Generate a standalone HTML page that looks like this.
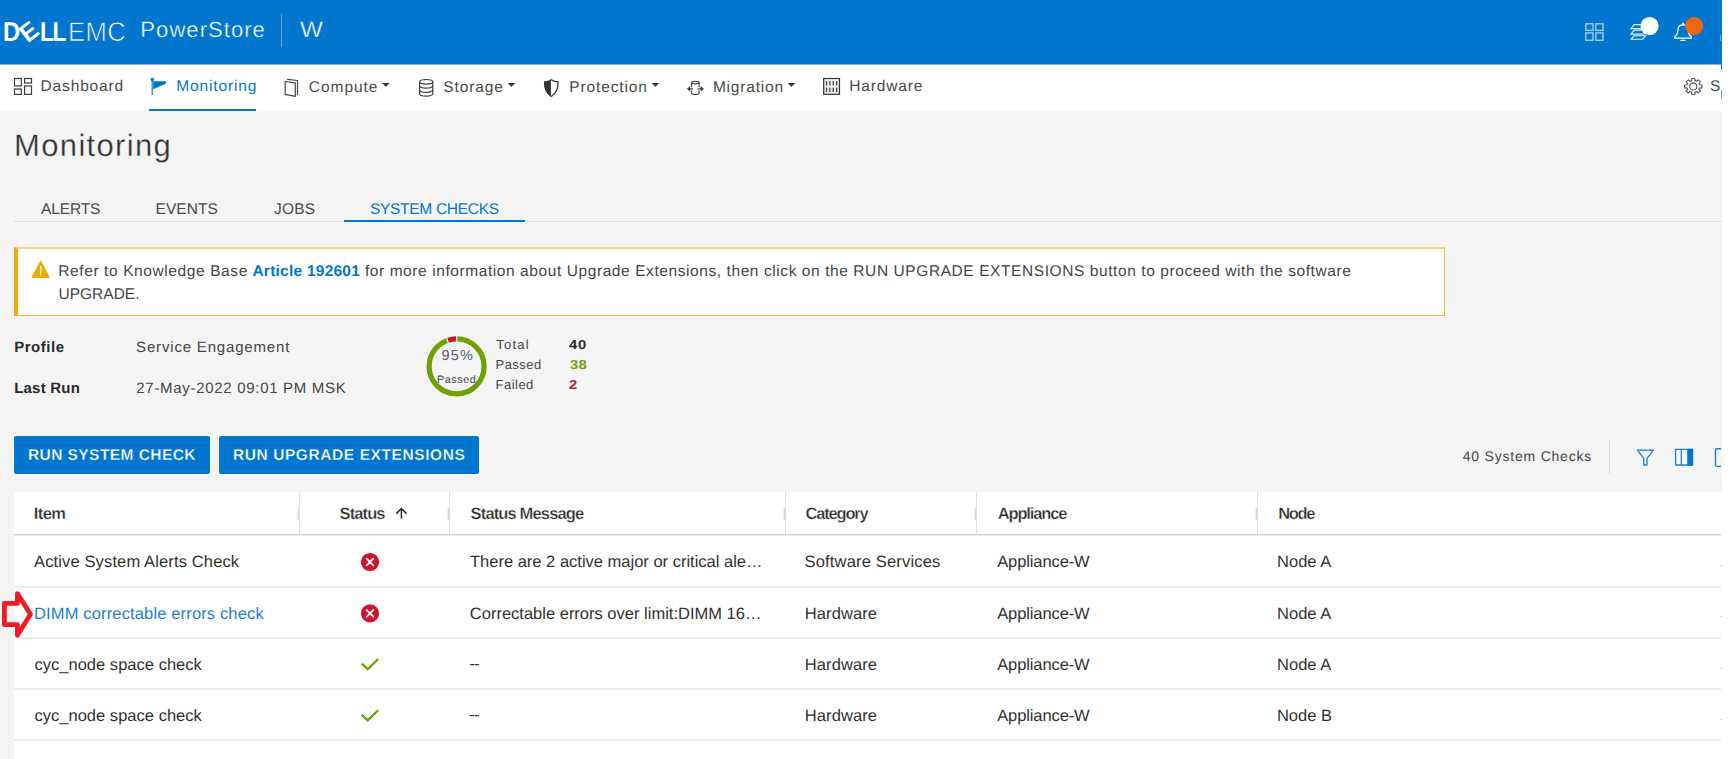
<!DOCTYPE html>
<html lang="en">
<head>
<meta charset="utf-8">
<title>PowerStore - Monitoring - System Checks</title>
<style>
html,body{margin:0;padding:0;}
body{width:1736px;height:759px;overflow:hidden;background:#fff;font-family:"Liberation Sans",sans-serif;}
#app{position:absolute;left:0;top:0;width:1722px;height:759px;overflow:hidden;background:#f4f4f4;}
.abs{position:absolute;}
.t{position:absolute;white-space:nowrap;font-family:"Liberation Sans",sans-serif;text-rendering:geometricPrecision;}
#hdr{position:absolute;left:0;top:0;width:1722px;height:64px;background:#0076ce;}
#nav{position:absolute;left:0;top:64px;width:1722px;height:47px;background:#fff;}
.btn{position:absolute;top:436px;height:38px;background:#0076ce;border-radius:2px;}
#tbl{position:absolute;left:14px;top:492px;width:1710px;height:270px;background:#fff;}
.hl{position:absolute;left:14px;width:1707px;height:2px;background:#eceef3;}
.vd{position:absolute;top:492px;width:1px;height:42px;background:#dcdfe4;}
.vh{position:absolute;top:508px;width:2px;height:12px;background:linear-gradient(90deg,#eceef1 0,#eceef1 50%,#d3d6dc 50%,#d3d6dc 100%);}
svg{position:absolute;overflow:visible;}
</style>
</head>
<body>
<div id="app">
  <div id="hdr"></div>
  <div id="nav"></div>
  <div class="abs" style="left:0;top:64px;width:1722px;height:1px;background:#7fbae6;"></div>

  <!-- header divider -->
  <div class="abs" style="left:281px;top:14px;width:1px;height:33px;background:#5aa6df;"></div>

  <!-- nav active underline -->
  <div class="abs" style="left:149px;top:109px;width:107px;height:2px;background:#0076ce;"></div>

  <!-- tabs line -->
  <div class="abs" style="left:14px;top:221px;width:1710px;height:1px;background:#dedede;"></div>
  <div class="abs" style="left:344px;top:220px;width:181px;height:2px;background:#0076ce;"></div>

  <!-- alert -->
  <div class="abs" style="left:14px;top:247px;width:1431px;height:69px;box-sizing:border-box;background:#fff;border:1px solid #f1bb2d;border-top:2px solid #f6d480;border-left:4px solid #efab0b;"></div>

  <!-- buttons -->
  <div class="btn" style="left:14px;width:196px;"></div>
  <div class="btn" style="left:219px;width:260px;"></div>

  <!-- toolbar divider -->
  <div class="abs" style="left:1609px;top:440px;width:1px;height:34px;background:#dcdcdc;"></div>

  <!-- table -->
  <div id="tbl"></div>
  <div class="abs" style="left:14px;top:534px;width:1707px;height:1px;background:#cdd0d7;"></div>
  <div class="abs" style="left:14px;top:535px;width:1707px;height:1px;background:#e9ebef;"></div>
  <div class="hl" style="top:586px;"></div>
  <div class="hl" style="top:637px;"></div>
  <div class="hl" style="top:688px;"></div>
  <div class="hl" style="top:739px;"></div>
  <div class="vd" style="left:299px;"></div>
  <div class="vd" style="left:449px;"></div>
  <div class="vd" style="left:785px;"></div>
  <div class="vd" style="left:976px;"></div>
  <div class="vd" style="left:1257px;"></div>
  <div class="vh" style="left:297px;"></div>
  <div class="vh" style="left:447px;"></div>
  <div class="vh" style="left:783px;"></div>
  <div class="vh" style="left:974px;"></div>
  <div class="vh" style="left:1255px;"></div>

<svg id="ico" style="left:0;top:0;overflow:hidden" width="1721" height="759" viewBox="0 0 1721 759">
  <!-- ===== header right icons ===== -->
  <g fill="none" stroke="#a3ccee" stroke-width="1.4">
    <rect x="1585.8" y="23.8" width="7.2" height="6.6"/>
    <rect x="1595.8" y="23.8" width="7.2" height="6.6"/>
    <rect x="1585.8" y="32.9" width="7.2" height="7.4"/>
    <rect x="1595.8" y="32.9" width="7.2" height="7.4"/>
  </g>
  <g fill="none" stroke="#e4f0fa" stroke-width="1.1" stroke-linejoin="miter">
    <path d="M1634.3 24.6 L1647 24.6 L1643.6 28.6 L1630.9 28.6 Z"/>
    <path d="M1634.3 30.1 L1647 30.1 L1643.6 34.1 L1630.9 34.1 Z"/>
    <path d="M1634.0 35.8 L1645.6 35.8 L1642.6 39.3 L1631.0 39.3 Z"/>
  </g>
  <circle cx="1649.6" cy="26" r="9.1" fill="#fff"/>
  <g fill="none" stroke="#fff" stroke-width="1.3" stroke-linejoin="round" stroke-linecap="round">
    <path d="M1674.7 38.2 L1691.3 38.2 L1691.3 36.6 C1688.6 35.2 1688.2 33 1688 29.5 C1687.8 26.3 1685.8 24.9 1683 24.9 C1680.2 24.9 1678.2 26.3 1678 29.5 C1677.8 33 1677.4 35.2 1674.7 36.6 Z"/>
    <path d="M1681 40.4 L1685 40.4"/>
    <path d="M1683 23.2 L1683 24.6" stroke-width="1.6"/>
  </g>
  <circle cx="1694.1" cy="26" r="9.05" fill="#f0650f"/>
  <rect x="1720" y="34.5" width="1" height="6.5" fill="#6fb2e6"/>

  <!-- ===== nav icons ===== -->
  <!-- dashboard -->
  <g fill="none" stroke="#3d3d3d" stroke-width="1.2">
    <rect x="14.5" y="78.5" width="6.8" height="7.4"/>
    <rect x="24.6" y="78.5" width="6.9" height="4.5"/>
    <rect x="14.5" y="89" width="6.8" height="5.4"/>
    <rect x="24.6" y="86" width="6.9" height="8.4"/>
  </g>
  <!-- flag -->
  <g fill="#0076ce">
    <rect x="151.5" y="79" width="1.5" height="16" fill="#3f97da"/>
    <circle cx="152.3" cy="79.6" r="1.8"/>
    <path d="M153.2 81.2 L165 81.2 Q166.6 81.4 166.2 82.7 Q165.9 83.5 165 83.9 L153.2 89.3 Z"/>
  </g>
  <!-- compute -->
  <g fill="none" stroke="#454545" stroke-width="1.2" stroke-linejoin="round" stroke-linecap="round">
    <path d="M285.2 81.5 L295.3 82.9 L295.3 96.3 L285.2 94.4 Z"/>
    <path d="M287.6 79.4 L297.5 80.5 L297.5 94.6"/>
  </g>
  <!-- storage -->
  <g fill="none" stroke="#3d3d3d" stroke-width="1.2">
    <ellipse cx="426.2" cy="81.8" rx="6.6" ry="2.3"/>
    <path d="M419.6 81.8 L419.6 93.8 A6.6 2.4 0 0 0 432.8 93.8 L432.8 81.8"/>
    <path d="M419.6 85.8 A6.6 2.4 0 0 0 432.8 85.8"/>
    <path d="M419.6 89.9 A6.6 2.4 0 0 0 432.8 89.9"/>
  </g>
  <!-- shield -->
  <g stroke="#333" stroke-width="1.2" stroke-linejoin="round">
    <path d="M551.3 79.7 C549 81.4 546.6 81.8 544.5 81.8 C544.3 88 546.3 93.3 551.3 96.4 C556.3 93.3 558.3 88 558.1 81.8 C556 81.8 553.6 81.4 551.3 79.7 Z" fill="none"/>
    <path d="M550.9 79.9 C549 81.4 546.6 81.8 544.5 81.8 C544.3 88 546.3 93.3 550.9 96.2 Z" fill="#333" stroke="none"/>
  </g>
  <!-- migration -->
  <g fill="none" stroke="#4a4a4a" stroke-width="1.2">
    <ellipse cx="695.3" cy="82.6" rx="3.8" ry="1.3"/>
    <path d="M691.5 82.6 L691.5 87.2 M691.5 90.5 L691.5 93 A3.8 1.5 0 0 0 699.1 93 L699.1 90.5 M699.1 87.2 L699.1 82.6"/>
    <path d="M689.6 88.8 L693 88.8 M697.6 88.8 L701.2 88.8"/>
  </g>
  <path d="M686.9 88.8 L690.1 85.9 L690.1 91.7 Z M703.9 88.8 L700.7 85.9 L700.7 91.7 Z" fill="#3d3d3d"/>
  <!-- hardware -->
  <rect x="823.7" y="78.5" width="15.8" height="15.8" fill="#ececec" stroke="#333" stroke-width="1.2"/>
  <g fill="#444">
    <rect x="825.9" y="80.9" width="1.3" height="4.5" rx=".6"/><rect x="829.2" y="80.9" width="1.3" height="4.5" rx=".6"/><rect x="832.6" y="80.9" width="1.3" height="4.5" rx=".6"/><rect x="836.0" y="80.9" width="1.3" height="4.5" rx=".6"/>
    <rect x="825.9" y="87.5" width="1.3" height="4.5" rx=".6"/><rect x="829.2" y="87.5" width="1.3" height="4.5" rx=".6"/><rect x="832.6" y="87.5" width="1.3" height="4.5" rx=".6"/><rect x="836.0" y="87.5" width="1.3" height="4.5" rx=".6"/>
  </g>
  <!-- carets -->
  <g fill="#333">
    <path d="M382 83 L389.8 83 L385.9 86.8 Z"/>
    <path d="M507.6 83 L515.4 83 L511.5 86.8 Z"/>
    <path d="M651.5 83 L659.3 83 L655.4 86.8 Z"/>
    <path d="M787.6 83 L795.4 83 L791.5 86.8 Z"/>
  </g>
  <!-- gear -->
  <g fill="none" stroke="#555" stroke-width="1.2" stroke-linejoin="round">
    <path d="M1691.56 80.14 L1691.71 77.85 A8.7 8.7 0 0 1 1694.89 77.85 L1695.04 80.14 A6.5 6.5 0 0 1 1696.50 80.74 L1698.23 79.23 A8.7 8.7 0 0 1 1700.47 81.47 L1698.96 83.20 A6.5 6.5 0 0 1 1699.56 84.66 L1701.85 84.81 A8.7 8.7 0 0 1 1701.85 87.99 L1699.56 88.14 A6.5 6.5 0 0 1 1698.96 89.60 L1700.47 91.33 A8.7 8.7 0 0 1 1698.23 93.57 L1696.50 92.06 A6.5 6.5 0 0 1 1695.04 92.66 L1694.89 94.95 A8.7 8.7 0 0 1 1691.71 94.95 L1691.56 92.66 A6.5 6.5 0 0 1 1690.10 92.06 L1688.37 93.57 A8.7 8.7 0 0 1 1686.13 91.33 L1687.64 89.60 A6.5 6.5 0 0 1 1687.04 88.14 L1684.75 87.99 A8.7 8.7 0 0 1 1684.75 84.81 L1687.04 84.66 A6.5 6.5 0 0 1 1687.64 83.20 L1686.13 81.47 A8.7 8.7 0 0 1 1688.37 79.23 L1690.10 80.74 A6.5 6.5 0 0 1 1691.56 80.14 Z" transform="translate(1693.3 86.4) scale(1.0 0.905) translate(-1693.3 -86.4)"/>
    <circle cx="1693.3" cy="86.4" r="3.6"/>
  </g>
  <!-- artifacts at right edge -->

  <!-- ===== warning icon ===== -->
  <path d="M40.7 261.6 L48.9 277.2 L32.5 277.2 Z" fill="#efac00" stroke="#efac00" stroke-width="1.5" stroke-linejoin="round"/>
  <rect x="40" y="265.9" width="1.6" height="7.4" fill="#fff4d6"/>
  <rect x="40" y="274.2" width="1.6" height="1.5" fill="#fff4d6"/>

  <!-- ===== donut ===== -->
  <g fill="none" stroke-width="5.2">
    <circle cx="456.6" cy="366.4" r="27.5" stroke="#6ea204"/>
    <path d="M446.97 340.64 A27.5 27.5 0 0 1 457.32 338.91" stroke="#f4f4f4" stroke-width="6"/>
    <path d="M448.10 340.25 A27.5 27.5 0 0 1 456.12 338.90" stroke="#ce1432"/>
  </g>

  <!-- ===== toolbar icons ===== -->
  <g fill="none" stroke="#1a7fd4" stroke-width="1.3" stroke-linejoin="round">
    <path d="M1637.4 450.1 L1653.4 450.1 L1647 458.4 L1647 465 L1643.7 465 L1643.7 458.4 Z"/>
    <rect x="1675.6" y="449.3" width="16.9" height="15.7" fill="#fbfbfb"/>
    <path d="M1681.3 449.3 L1681.3 465"/>
  </g>
  <rect x="1687.2" y="448.9" width="5.9" height="16.7" fill="#0076ce"/>
  <rect x="1715.5" y="448.8" width="12" height="17.6" rx="1.6" fill="none" stroke="#1a7fd4" stroke-width="1.4"/>

  <!-- ===== status icons ===== -->
  <g>
    <circle cx="370" cy="562" r="9.1" fill="#d0122e"/>
    <path d="M366.7 558.7 L373.3 565.3 M373.3 558.7 L366.7 565.3" stroke="#fff" stroke-width="1.9" stroke-linecap="round"/>
    <circle cx="370" cy="613.4" r="9.1" fill="#d0122e"/>
    <path d="M366.7 610.1 L373.3 616.7 M373.3 610.1 L366.7 616.7" stroke="#fff" stroke-width="1.9" stroke-linecap="round"/>
    <path d="M361.8 663.6 L367.7 669.2 L378.2 659" fill="none" stroke="#68a300" stroke-width="2.3"/>
    <path d="M361.8 714.8 L367.7 720.4 L378.2 710.2" fill="none" stroke="#68a300" stroke-width="2.3"/>
  </g>

  <!-- sort arrow -->
  <path d="M401.4 518.6 L401.4 509 M396.3 513.6 L401.4 508.5 L406.5 513.6" fill="none" stroke="#2b2b2b" stroke-width="1.5"/>
  <!-- ===== red annotation arrow ===== -->
  <path d="M4.4 603.4 L17.4 603.4 L17.4 593.6 L30.5 614.3 L17.4 635.3 L17.4 624.7 L4.4 624.7 Z" fill="none" stroke="#ed1c24" stroke-width="4.8" stroke-linejoin="round"/>
</svg>
<!-- DELL EMC logo as real text -->
<div class="t lg" id="lgD" style="left:2.6px;top:13.6px;font-size:27.2px;line-height:36px;font-weight:700;color:#fff;transform-origin:0 50%;transform:scaleX(0.87);">D</div>
<div class="t lg" id="lgE" style="left:19.5px;top:13.6px;font-size:27.2px;line-height:36px;font-weight:700;color:#fff;transform-origin:50% 50%;transform:rotate(-38deg) scale(0.9,0.93);">E</div>
<div class="t lg" id="lgLL" style="left:39.9px;top:13.6px;font-size:27.2px;line-height:36px;font-weight:700;color:#fff;transform-origin:0 50%;transform:scaleX(0.84);letter-spacing:-1.7px;">LL</div>
<div class="t lg" id="lgEMC" style="left:68.2px;top:13.6px;font-size:27.2px;line-height:36px;font-weight:400;color:#fff;-webkit-text-stroke:0.75px #0076ce;transform-origin:0 50%;transform:scaleX(0.94);letter-spacing:0.5px;">EMC</div>

  <div class="abs" style="left:1721px;top:64px;width:1px;height:6px;background:#0076ce;"></div>
  <div class="abs" style="left:1721px;top:90px;width:1px;height:9px;background:#62abe8;"></div>
  <div class="abs" style="left:1721px;top:565px;width:1px;height:1px;background:#b4b4b4;"></div>
  <div class="abs" style="left:1721px;top:616px;width:1px;height:1px;background:#b4b4b4;"></div>
  <div class="abs" style="left:1721px;top:668px;width:1px;height:1px;background:#b4b4b4;"></div>
  <div class="abs" style="left:1721px;top:719px;width:1px;height:1px;background:#b4b4b4;"></div>
  <div class="abs" style="left:323px;top:36px;width:1px;height:1px;background:#3f9be0;"></div>

<div class="t" style="left:140.37px;top:15px;font-size:22px;line-height:29px;color:#fff;letter-spacing:1.062px;-webkit-text-stroke:0.35px #0076ce;">PowerStore</div>
<div class="t" style="left:299.51px;top:15px;font-size:22px;line-height:29px;color:#fff;-webkit-text-stroke:0.35px #0076ce;transform:scaleX(1.1);transform-origin:0 0;">W</div>
<div class="t" style="left:40.53px;top:76px;font-size:15.5px;line-height:21px;color:#4a4a4a;letter-spacing:0.858px;">Dashboard</div>
<div class="t" style="left:176.28px;top:76px;font-size:15.5px;line-height:21px;color:#0076ce;letter-spacing:0.867px;">Monitoring</div>
<div class="t" style="left:308.84px;top:77px;font-size:15.5px;line-height:21px;color:#4a4a4a;letter-spacing:0.945px;">Compute</div>
<div class="t" style="left:443.30px;top:77px;font-size:15.5px;line-height:21px;color:#4a4a4a;letter-spacing:0.898px;">Storage</div>
<div class="t" style="left:569.32px;top:77px;font-size:15.5px;line-height:21px;color:#4a4a4a;letter-spacing:0.856px;">Protection</div>
<div class="t" style="left:712.88px;top:77px;font-size:15.5px;line-height:21px;color:#4a4a4a;letter-spacing:0.801px;">Migration</div>
<div class="t" style="left:849.16px;top:76px;font-size:15.5px;line-height:21px;color:#4a4a4a;letter-spacing:0.851px;">Hardware</div>
<div class="t" style="left:1710.01px;top:76px;font-size:15.5px;line-height:21px;color:#4a4a4a;">S</div>
<div class="t" style="left:14.12px;top:126px;font-size:31px;line-height:39px;color:#303030;letter-spacing:1.322px;-webkit-text-stroke:0.3px #f4f4f4;">Monitoring</div>
<div class="t" style="left:40.98px;top:199px;font-size:15.5px;line-height:21px;color:#4a4a4a;letter-spacing:-0.123px;">ALERTS</div>
<div class="t" style="left:155.57px;top:199px;font-size:15.5px;line-height:21px;color:#4a4a4a;letter-spacing:0.067px;">EVENTS</div>
<div class="t" style="left:274.07px;top:199px;font-size:15.5px;line-height:21px;color:#4a4a4a;letter-spacing:0.144px;">JOBS</div>
<div class="t" style="left:369.94px;top:199px;font-size:15.5px;line-height:21px;color:#0076ce;letter-spacing:-0.295px;">SYSTEM CHECKS</div>
<div class="t" style="left:58.32px;top:261px;font-size:15.5px;line-height:21px;color:#454545;letter-spacing:0.599px;">Refer to Knowledge Base</div>
<div class="t" style="left:252.44px;top:261px;font-size:15.5px;line-height:21px;color:#0076ce;font-weight:700;letter-spacing:0.241px;">Article 192601</div>
<div class="t" style="left:364.92px;top:261px;font-size:15.5px;line-height:21px;color:#454545;letter-spacing:0.582px;">for more information about Upgrade Extensions, then click on the RUN UPGRADE EXTENSIONS button to proceed with the software</div>
<div class="t" style="left:58.52px;top:284px;font-size:15.5px;line-height:21px;color:#454545;">UPGRADE.</div>
<div class="t" style="left:14.13px;top:337px;font-size:15px;line-height:21px;color:#2b2b2b;font-weight:700;letter-spacing:0.530px;">Profile</div>
<div class="t" style="left:136.08px;top:337px;font-size:15px;line-height:21px;color:#454545;letter-spacing:0.825px;">Service Engagement</div>
<div class="t" style="left:14.13px;top:378px;font-size:15px;line-height:21px;color:#2b2b2b;font-weight:700;letter-spacing:0.232px;">Last Run</div>
<div class="t" style="left:136.34px;top:378px;font-size:15px;line-height:21px;color:#454545;letter-spacing:0.696px;">27-May-2022 09:01 PM MSK</div>
<div class="t" style="left:441.38px;top:346px;font-size:14.5px;line-height:20px;color:#56606a;letter-spacing:1.231px;">95%</div>
<div class="t" style="left:437.02px;top:372px;font-size:10.8px;line-height:16px;color:#454545;letter-spacing:0.567px;">Passed</div>
<div class="t" style="left:496.29px;top:335px;font-size:13px;line-height:19px;color:#454545;letter-spacing:1.212px;">Total</div>
<div class="t" style="left:495.53px;top:355px;font-size:13px;line-height:19px;color:#454545;letter-spacing:0.465px;">Passed</div>
<div class="t" style="left:495.53px;top:375px;font-size:13px;line-height:19px;color:#454545;letter-spacing:0.485px;">Failed</div>
<div class="t" style="left:569.34px;top:335px;font-size:13px;line-height:19px;color:#2b2b2b;font-weight:700;letter-spacing:0.764px;transform:scaleX(1.14);transform-origin:0 0;">40</div>
<div class="t" style="left:569.62px;top:355px;font-size:13px;line-height:19px;color:#6ea204;font-weight:700;letter-spacing:0.164px;transform:scaleX(1.14);transform-origin:0 0;">38</div>
<div class="t" style="left:569.40px;top:375px;font-size:13px;line-height:19px;color:#d0122e;font-weight:700;transform:scaleX(1.14);transform-origin:0 0;">2</div>
<div class="t" style="left:27.95px;top:445px;font-size:15.5px;line-height:21px;color:#fff;font-weight:700;letter-spacing:0.435px;-webkit-text-stroke:0.3px #0076ce;">RUN SYSTEM CHECK</div>
<div class="t" style="left:232.93px;top:445px;font-size:15.5px;line-height:21px;color:#fff;font-weight:700;letter-spacing:0.584px;-webkit-text-stroke:0.3px #0076ce;">RUN UPGRADE EXTENSIONS</div>
<div class="t" style="left:1462.79px;top:446px;font-size:14px;line-height:20px;color:#454545;letter-spacing:0.782px;">40 System Checks</div>
<div class="t" style="left:33.82px;top:503px;font-size:16.5px;line-height:22px;color:#2b2b2b;font-weight:700;letter-spacing:-0.589px;-webkit-text-stroke:0.3px #fff;">Item</div>
<div class="t" style="left:339.62px;top:503px;font-size:16.5px;line-height:22px;color:#2b2b2b;font-weight:700;letter-spacing:-0.899px;-webkit-text-stroke:0.3px #fff;">Status</div>
<div class="t" style="left:470.62px;top:503px;font-size:16.5px;line-height:22px;color:#2b2b2b;font-weight:700;letter-spacing:-0.857px;-webkit-text-stroke:0.3px #fff;">Status Message</div>
<div class="t" style="left:805.60px;top:503px;font-size:16.5px;line-height:22px;color:#2b2b2b;font-weight:700;letter-spacing:-1.209px;-webkit-text-stroke:0.3px #fff;">Category</div>
<div class="t" style="left:997.75px;top:503px;font-size:16.5px;line-height:22px;color:#2b2b2b;font-weight:700;letter-spacing:-1.157px;-webkit-text-stroke:0.3px #fff;">Appliance</div>
<div class="t" style="left:1278.17px;top:503px;font-size:16.5px;line-height:22px;color:#2b2b2b;font-weight:700;letter-spacing:-1.289px;-webkit-text-stroke:0.3px #fff;">Node</div>
<div class="t" style="left:34.06px;top:551px;font-size:16.5px;line-height:22px;color:#313131;letter-spacing:0.132px;">Active System Alerts Check</div>
<div class="t" style="left:34.05px;top:603px;font-size:16.5px;line-height:22px;color:#1a7fd3;letter-spacing:0.145px;">DIMM correctable errors check</div>
<div class="t" style="left:34.45px;top:654px;font-size:16.5px;line-height:22px;color:#313131;letter-spacing:0.024px;">cyc_node space check</div>
<div class="t" style="left:34.45px;top:705px;font-size:16.5px;line-height:22px;color:#313131;letter-spacing:0.024px;">cyc_node space check</div>
<div class="t" style="left:470.00px;top:551px;font-size:16.5px;line-height:22px;color:#313131;">There are 2 active major or critical ale…</div>
<div class="t" style="left:469.84px;top:603px;font-size:16.5px;line-height:22px;color:#313131;">Correctable errors over limit:DIMM 16…</div>
<div class="t" style="left:469.14px;top:653px;font-size:16.5px;line-height:22px;color:#313131;letter-spacing:-0.595px;">--</div>
<div class="t" style="left:469.14px;top:704px;font-size:16.5px;line-height:22px;color:#313131;letter-spacing:-0.595px;">--</div>
<div class="t" style="left:804.58px;top:551px;font-size:16.5px;line-height:22px;color:#313131;letter-spacing:0.170px;">Software Services</div>
<div class="t" style="left:804.77px;top:603px;font-size:16.5px;line-height:22px;color:#313131;letter-spacing:0.107px;">Hardware</div>
<div class="t" style="left:804.77px;top:654px;font-size:16.5px;line-height:22px;color:#313131;letter-spacing:0.107px;">Hardware</div>
<div class="t" style="left:804.77px;top:705px;font-size:16.5px;line-height:22px;color:#313131;letter-spacing:0.107px;">Hardware</div>
<div class="t" style="left:997.19px;top:551px;font-size:16.5px;line-height:22px;color:#313131;letter-spacing:-0.106px;">Appliance-W</div>
<div class="t" style="left:997.19px;top:603px;font-size:16.5px;line-height:22px;color:#313131;letter-spacing:-0.106px;">Appliance-W</div>
<div class="t" style="left:997.19px;top:654px;font-size:16.5px;line-height:22px;color:#313131;letter-spacing:-0.106px;">Appliance-W</div>
<div class="t" style="left:997.19px;top:705px;font-size:16.5px;line-height:22px;color:#313131;letter-spacing:-0.106px;">Appliance-W</div>
<div class="t" style="left:1276.93px;top:551px;font-size:16.5px;line-height:22px;color:#313131;letter-spacing:0.057px;">Node A</div>
<div class="t" style="left:1276.93px;top:603px;font-size:16.5px;line-height:22px;color:#313131;letter-spacing:0.057px;">Node A</div>
<div class="t" style="left:1276.93px;top:654px;font-size:16.5px;line-height:22px;color:#313131;letter-spacing:0.057px;">Node A</div>
<div class="t" style="left:1276.93px;top:705px;font-size:16.5px;line-height:22px;color:#313131;letter-spacing:0.026px;">Node B</div>
</div>
</body>
</html>
